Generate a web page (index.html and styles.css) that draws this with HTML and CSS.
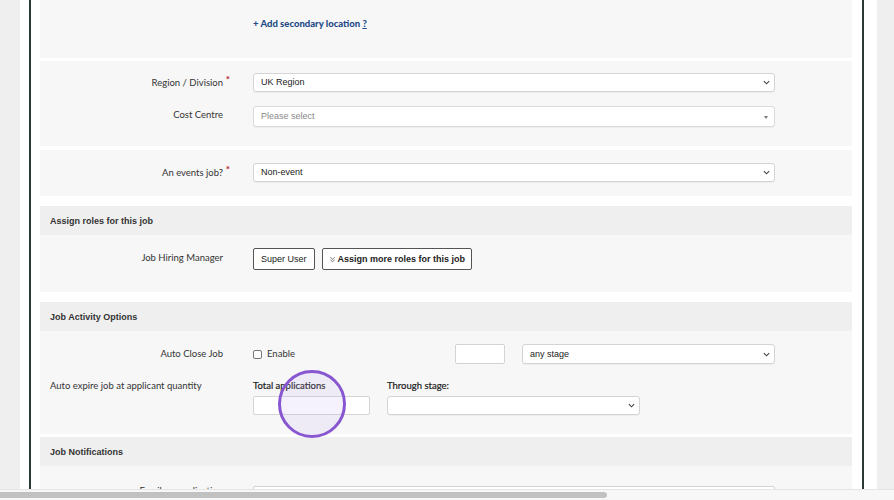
FILE: index.html
```html
<!DOCTYPE html>
<html lang="en">
<head>
    <meta charset="UTF-8">
    <meta name="viewport" content="width=device-width, initial-scale=1.0">
    <title>Edit Job</title>
    <link rel="stylesheet" href="styles.css">
</head>
<body>
    <div class="page">
        <div class="frame">
            <section class="panel panel-link">
                <a class="add-link" href="#">+ Add secondary location <u>?</u></a>
            </section>

            <section class="panel panel-region">
                <div class="row">
                    <div class="label req">Region / Division</div>
                    <div class="field">
                        <div class="select">UK Region
                            <svg class="chev" viewBox="0 0 8 5"><path d="M1 1l3 3 3-3"/></svg>
                        </div>
                    </div>
                </div>
                <div class="row row-cost">
                    <div class="label">Cost Centre</div>
                    <div class="field">
                        <div class="select select2">Please select
                            <span class="caret"></span>
                        </div>
                    </div>
                </div>
            </section>

            <section class="panel panel-event">
                <div class="row">
                    <div class="label req">An events job?</div>
                    <div class="field">
                        <div class="select">Non-event
                            <svg class="chev" viewBox="0 0 8 5"><path d="M1 1l3 3 3-3"/></svg>
                        </div>
                    </div>
                </div>
            </section>

            <h3 class="section-head">Assign roles for this job</h3>
            <section class="panel panel-roles">
                <div class="row">
                    <div class="label">Job Hiring Manager</div>
                    <div class="field buttons">
                        <button class="btn">Super User</button>
                        <button class="btn btn-bold">
                            <svg class="dchev" viewBox="0 0 8 8"><path d="M1.5 1.5l2.5 2.2 2.5-2.2M1.5 4.3l2.5 2.2 2.5-2.2"/></svg>
                            Assign more roles for this job
                        </button>
                    </div>
                </div>
            </section>

            <h3 class="section-head">Job Activity Options</h3>
            <section class="panel panel-activity">
                <div class="row">
                    <div class="label">Auto Close Job</div>
                    <div class="field close-field">
                        <label class="check"><span class="box"></span>Enable</label>
                        <div class="input small"></div>
                        <div class="select grow">any stage
                            <svg class="chev" viewBox="0 0 8 5"><path d="M1 1l3 3 3-3"/></svg>
                        </div>
                    </div>
                </div>
                <div class="row row-expire">
                    <div class="label label-left">Auto expire job at applicant quantity</div>
                    <div class="field expire-field">
                        <div class="col col-total">
                            <div class="sub">Total applications</div>
                            <div class="input"></div>
                        </div>
                        <div class="col col-stage">
                            <div class="sub">Through stage:</div>
                            <div class="select short">
                                <svg class="chev" viewBox="0 0 8 5"><path d="M1 1l3 3 3-3"/></svg>
                            </div>
                        </div>
                    </div>
                </div>
            </section>

            <h3 class="section-head">Job Notifications</h3>
            <section class="panel panel-notify">
                <div class="row">
                    <div class="label label-email">Email on application</div>
                    <div class="field">
                        <div class="input wide"></div>
                    </div>
                </div>
            </section>
        </div>
    </div>

    <div class="click-ring"></div>

    <div class="hscroll"><div class="thumb"></div></div>
</body>
</html>
```

FILE: styles.css
```css
:root {
    --panel: #f7f7f7;
    --head: #efefef;
    --text-dark: #333;
    --frame-line: #2c3a37;
    --link-blue: #1f4b86;
    --req-red: #b3202a;
}

* {
    margin: 0;
    padding: 0;
    box-sizing: border-box;
}

body {
    background: #efefef;
    height: 500px;
    overflow: hidden;
    font-family: "Liberation Sans", Arial, sans-serif;
    font-size: 9px;
    color: var(--text-dark);
}

.page {
    margin-left: 20px;
    width: 857px;
    height: 500px;
    overflow: hidden;
    background: #fff;
    padding: 0 13px 0 9px;
}

.frame {
    height: 100%;
    border-left: 2px solid var(--frame-line);
    border-right: 2px solid var(--frame-line);
    padding: 0 10px 0 9px;
}

.panel {
    background: var(--panel);
}

.section-head {
    background: var(--head);
    font-size: 9px;
    font-weight: bold;
    height: 29px;
    line-height: 30px;
    padding-left: 10px;
}

/* rows */
.row {
    display: flex;
    align-items: flex-start;
}

.label {
    width: 183px;
    margin-right: 30px;
    text-align: right;
    font-family: Lato, "Open Sans", sans-serif;
    font-size: 9.5px;
    line-height: 19px;
    position: relative;
    color: #333;
}

.label.req::after {
    content: "*";
    position: absolute;
    right: -7px;
    top: -3px;
    color: var(--req-red);
    font-size: 10px;
    font-weight: bold;
}

.label-left {
    text-align: left;
    padding-left: 10px;
    line-height: 14px;
}

.field {
    width: 522px;
}

/* panels */
.panel-link {
    height: 58px;
    padding: 17px 0 0 213px;
    margin-bottom: 3px;
}

.add-link {
    font-family: Lato, sans-serif;
    font-weight: 900;
    font-size: 9.5px;
    line-height: 14px;
    color: var(--link-blue);
    text-decoration: none;
}

.panel-region {
    height: 85px;
    padding-top: 12px;
    margin-bottom: 4px;
}

.row-cost {
    margin-top: 14px;
}

.row-cost .label {
    line-height: 17px;
}

.panel-event {
    height: 46px;
    padding-top: 13px;
    margin-bottom: 10px;
}

.panel-roles {
    height: 57px;
    padding-top: 13px;
    margin-bottom: 10px;
}

.panel-activity {
    height: 103px;
    padding-top: 13px;
    margin-bottom: 3px;
}

.panel-notify {
    height: 34px;
    padding-top: 20px;
    overflow: hidden;
}

.label-email {
    margin-top: -5px;
}

/* controls */
.select {
    position: relative;
    height: 19px;
    line-height: 17px;
    background: #fff;
    border: 1px solid #d4d4d4;
    border-radius: 3px;
    box-shadow: 0 1px 0 rgba(0, 0, 0, 0.04);
    padding-left: 7px;
    font-size: 9px;
    color: #222;
}

.chev {
    position: absolute;
    right: 4px;
    top: 6px;
    width: 7px;
    height: 5px;
    fill: none;
    stroke: #444;
    stroke-width: 1.3;
}

.select2 {
    height: 21px;
    line-height: 19px;
    border-color: #dadada;
    color: #8a8a8a;
}

.caret {
    position: absolute;
    right: 6px;
    top: 9px;
    border-left: 2.5px solid transparent;
    border-right: 2.5px solid transparent;
    border-top: 3px solid #777;
}

.input {
    height: 19px;
    background: #fff;
    border: 1px solid #d4d4d4;
    border-radius: 2px;
}

.buttons {
    display: flex;
    gap: 7px;
}

.btn {
    height: 22px;
    background: #fff;
    border: 1px solid #555;
    border-radius: 2px;
    padding: 0 7px;
    font-family: "Liberation Sans", Arial, sans-serif;
    font-size: 9px;
    color: #222;
    display: flex;
    align-items: center;
}

.btn-bold {
    font-weight: bold;
    padding: 0 6px;
}

.dchev {
    width: 7px;
    height: 7px;
    margin-right: 2px;
    fill: none;
    stroke: #555;
    stroke-width: 0.9;
}

.close-field {
    display: flex;
    align-items: center;
}

.check {
    width: 202px;
    display: flex;
    align-items: center;
    font-family: Lato, sans-serif;
    font-size: 9.5px;
    line-height: 20px;
}

.box {
    width: 9px;
    height: 9px;
    border: 1px solid #777;
    border-radius: 2px;
    background: #fff;
    margin-right: 5px;
}

.input.small {
    width: 50px;
    height: 20px;
    margin-right: 17px;
}

.select.grow {
    flex: 1;
    height: 20px;
    line-height: 18px;
}

.close-field .select .chev {
    top: 7px;
}

.row-expire {
    margin-top: 15px;
}

.expire-field {
    display: flex;
    gap: 17px;
}

.sub {
    font-family: Lato, sans-serif;
    font-size: 9.5px;
    line-height: 14px;
    margin-bottom: 3px;
    color: #222;
    -webkit-text-stroke: 0.2px #222;
}

.col-total {
    width: 117px;
}

.col-stage {
    width: 253px;
}

.input.wide {
    height: 20px;
}

/* overlay: click highlight */
.click-ring {
    position: absolute;
    left: 278px;
    top: 370px;
    width: 68px;
    height: 68px;
    border: 3px solid #8757cf;
    border-radius: 50%;
    background: rgba(190, 170, 245, 0.16);
}

/* fake horizontal scrollbar */
.hscroll {
    position: fixed;
    left: 0;
    bottom: 0;
    width: 100%;
    height: 11px;
    background: #f7f7f7;
    border-top: 1px solid #e4e4e4;
    padding-top: 2px;
}

.thumb {
    width: 607px;
    height: 6px;
    background: #c1c1c1;
    border-radius: 0 3px 3px 0;
}
```
